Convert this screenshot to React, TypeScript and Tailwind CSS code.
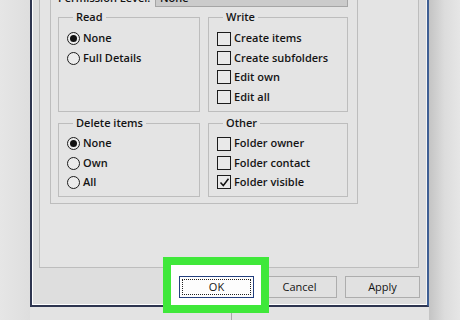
import { ReactNode } from 'react'

function Radio({ label, checked = false }: { label: string; checked?: boolean }) {
  return (
    <div className="flex h-[19.4px] items-center gap-[3px]">
      <span className="flex h-[13px] w-[13px] shrink-0 items-center justify-center rounded-full border border-[#1c1c1c] bg-[#ececec]">
        {checked && <span className="h-[7px] w-[7px] rounded-full bg-[#111]" />}
      </span>
      <span>{label}</span>
    </div>
  )
}

function Check({ label, checked = false }: { label: string; checked?: boolean }) {
  return (
    <div className="flex h-[19.4px] items-center gap-[3px]">
      <span className="flex h-[14px] w-[14px] shrink-0 items-center justify-center border border-[#1c1c1c] bg-[#e9e9e9]">
        {checked && (
          <svg width="11" height="11" viewBox="0 0 11 11">
            <path d="M1.5 5.5 L4.3 8.5 L9.5 1.8" fill="none" stroke="#111" strokeWidth="1.5" />
          </svg>
        )}
      </span>
      <span>{label}</span>
    </div>
  )
}

function Group({ title, h, pt, children }: { title: string; h: string; pt: string; children: ReactNode }) {
  return (
    <fieldset className={`${h} ${pt} border border-[#bdbdbd] px-[8px]`}>
      <legend className="ml-[6px] px-[3px] leading-[16px]">{title}</legend>
      {children}
    </fieldset>
  )
}

export default function App() {
  return (
    <div className="flex h-[320px] w-[460px] overflow-hidden bg-[#e3e3e3] font-['Open_Sans',sans-serif] text-[11px] font-semibold text-[#141414]">
      {/* desktop left of the window */}
      <div className="w-[30px] shrink-0 bg-gradient-to-r from-[#e6e6e6] to-[#dedede]" />

      {/* window column */}
      <div className="flex w-[399px] shrink-0 flex-col justify-end">
        <div className="border-x-2 border-b-2 border-l-[#2e3550] border-r-[#3f5f93] border-b-[#2e3550] bg-[#dedede]">
          <div className="flex flex-col border-x border-b border-l-white border-r-[#f4f4f4] border-b-white">
            {/* tab page */}
            <div className="ml-[6px] mr-[7px] border-x border-b border-[#bdbdbd] bg-[#e4e4e4]">
              <div className="mb-[63px] ml-[10px] w-[308px] border-x border-b border-[#bdbdbd] pb-[6px] pl-[7px] pr-[9px] pt-[10px]">
                <div className="flex h-[21px] items-end leading-[16px]">
                  <span className="w-[97px] pb-[1px]">Permission Level:</span>
                  <div className="flex h-full flex-1 items-end border border-[#a5a5a5] bg-[#cbcbcb] px-[4px]">None</div>
                </div>
                <div className="mt-[2px] grid grid-cols-[142px_140px] gap-x-[8px] gap-y-[3px]">
                  <Group title="Read" h="h-[103px]" pt="pt-[4px]">
                    <Radio label="None" checked />
                    <Radio label="Full Details" />
                  </Group>
                  <Group title="Write" h="h-[103px]" pt="pt-[4px]">
                    <Check label="Create items" />
                    <Check label="Create subfolders" />
                    <Check label="Edit own" />
                    <Check label="Edit all" />
                  </Group>
                  <Group title="Delete items" h="h-[82px]" pt="pt-[3px]">
                    <Radio label="None" checked />
                    <Radio label="Own" />
                    <Radio label="All" />
                  </Group>
                  <Group title="Other" h="h-[82px]" pt="pt-[3px]">
                    <Check label="Folder owner" />
                    <Check label="Folder contact" />
                    <Check label="Folder visible" checked />
                  </Group>
                </div>
              </div>
            </div>

            {/* buttons */}
            <div className="flex justify-end gap-[8px] pb-[6px] pr-[6px] pt-[8px] font-normal">
              <div className="relative">
                <div className="absolute -bottom-[15px] -left-[16px] -right-[15px] -top-[19px] border-[8px] border-[#3fe83a] bg-white" />
                <button className="relative flex h-[22px] w-[75px] items-center justify-center border border-[#233f7e] bg-[#fdfdfd] p-[2px]">
                  <span className="flex h-full w-full items-center justify-center border border-dotted border-[#222]">OK</span>
                </button>
              </div>
              <button className="h-[22px] w-[75px] border border-[#adadad] bg-[#e1e1e1]">Cancel</button>
              <button className="h-[22px] w-[75px] border border-[#adadad] bg-[#e1e1e1]">Apply</button>
            </div>
          </div>
        </div>
        <div className="h-[13px] shrink-0 pt-[5px]">
          <div className="ml-[201px] h-full w-px bg-[#a9a9a9]" />
        </div>
      </div>

      {/* window shadow on the right */}
      <div className="flex-1 bg-gradient-to-r from-[#c4c4c4] via-[#dcdcdc] to-[#e6e6e6]" />
    </div>
  )
}
